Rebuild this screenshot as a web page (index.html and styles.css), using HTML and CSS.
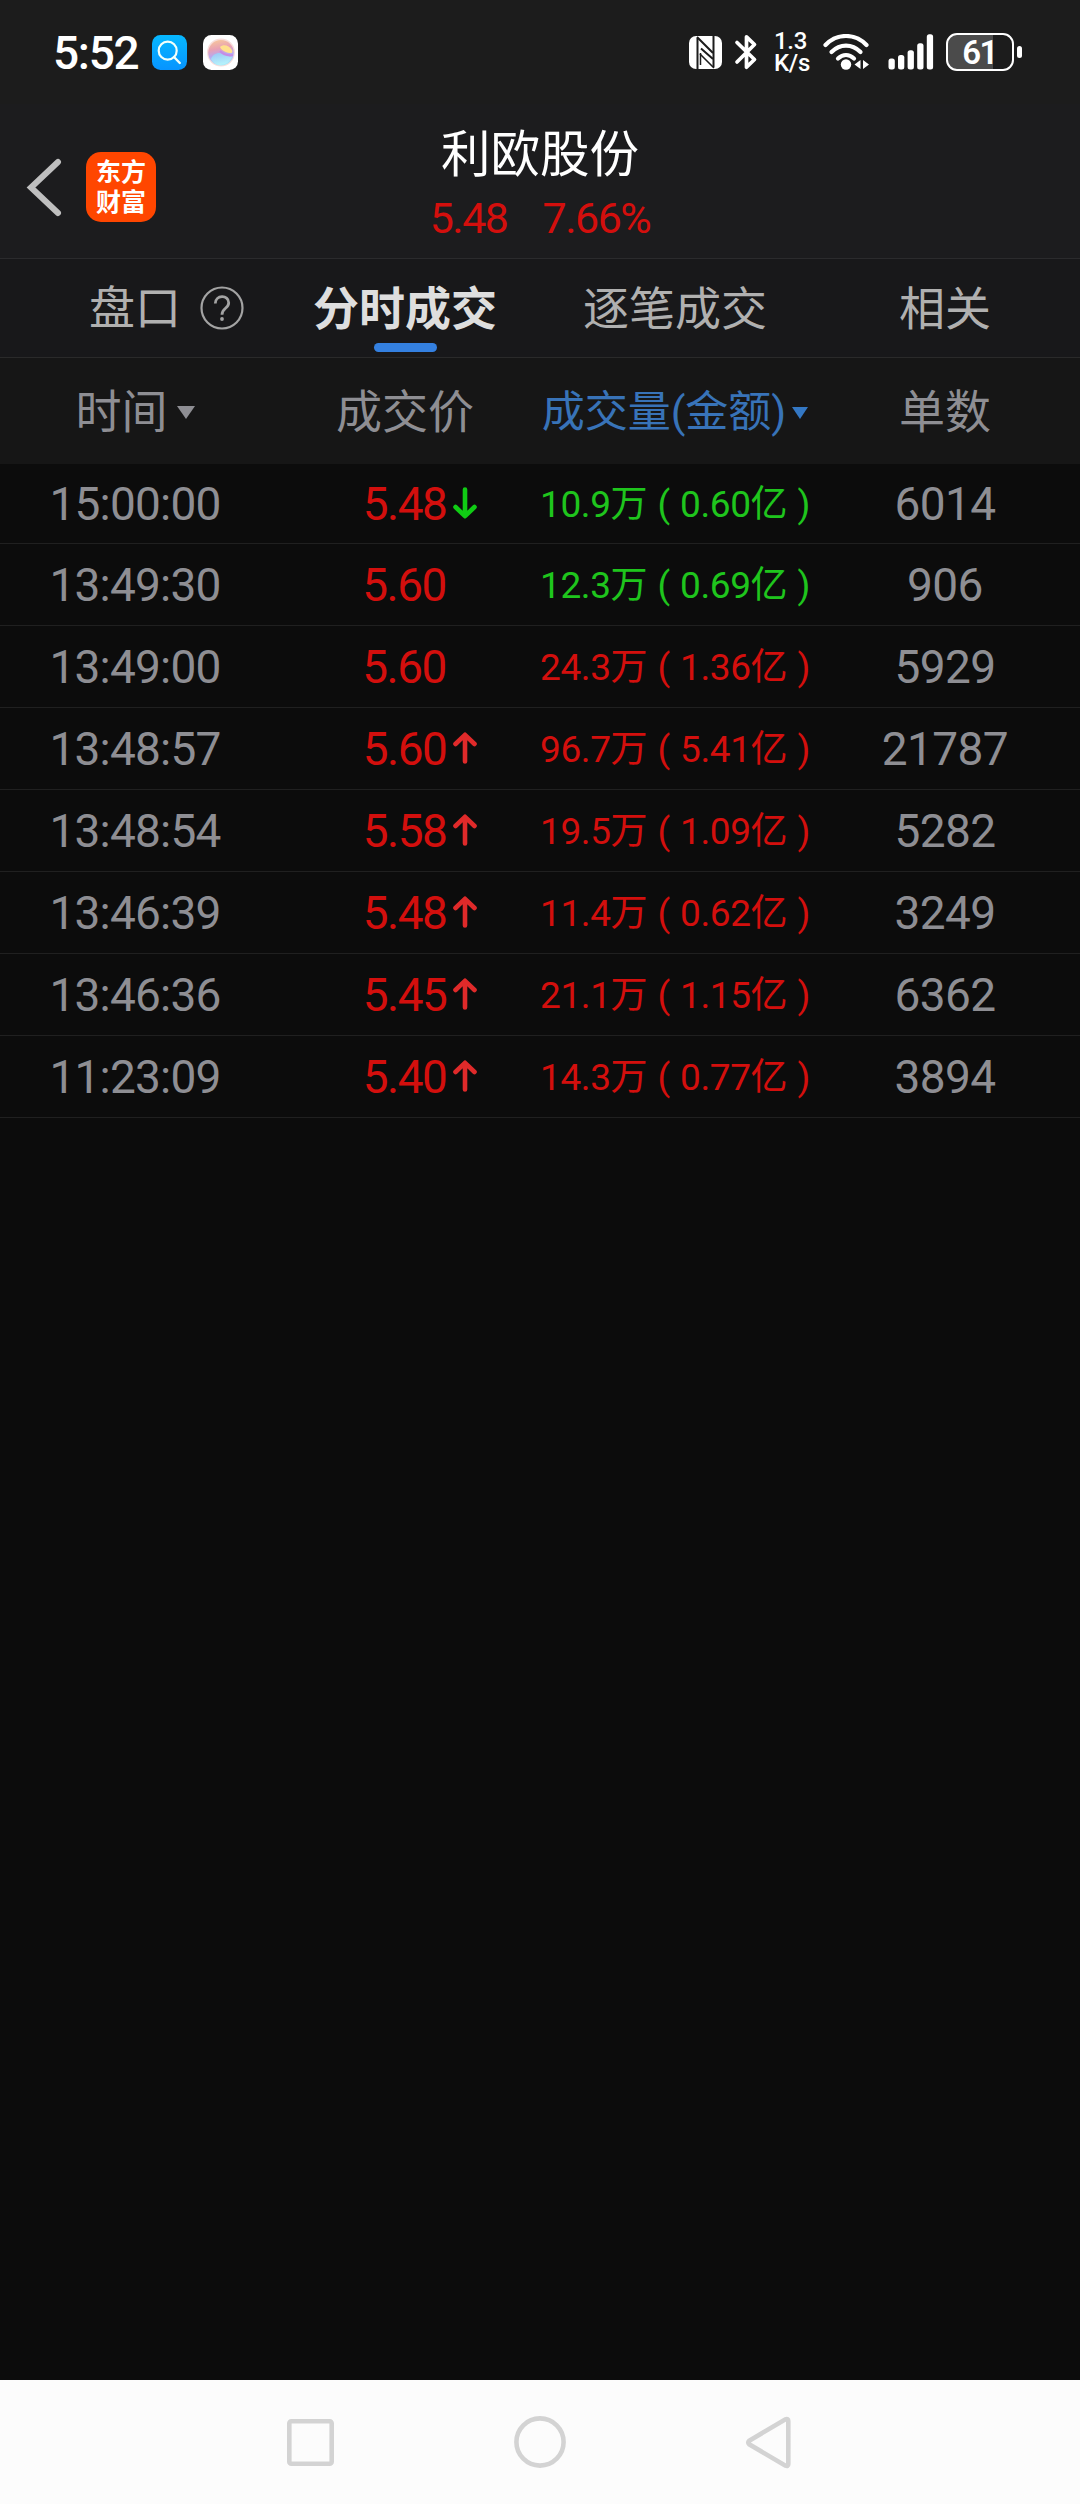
FILE: index.html
```
<!DOCTYPE html>
<html lang="zh-CN">
<head>
<meta charset="utf-8">
<title>利欧股份 - 分时成交</title>
<link rel="stylesheet" href="styles.css">
</head>
<body>
<svg class="defs" width="0" height="0">
  <symbol id="up" viewBox="0 0 24 32"><path d="M12 29.5V3M2.5 12 12 2.8 21.5 12" fill="none" stroke="currentColor" stroke-width="4.6" stroke-linecap="round" stroke-linejoin="round"/></symbol>
  <symbol id="down" viewBox="0 0 24 32"><path d="M12 2.5V29M2.5 20 12 29.2 21.5 20" fill="none" stroke="currentColor" stroke-width="4.6" stroke-linecap="round" stroke-linejoin="round"/></symbol>
</svg>
<div class="status">
  <span class="clock">5:52</span>
  <svg class="app-search" width="35" height="35" viewBox="0 0 35 35">
    <defs><linearGradient id="sky" x2="0" y2="1"><stop stop-color="#06b8ff"/><stop offset="1" stop-color="#0794ff"/></linearGradient></defs>
    <rect width="35" height="35" rx="8.5" fill="url(#sky)"/>
    <circle cx="15.7" cy="15.7" r="9" fill="none" stroke="#f2fffa" stroke-width="2.2"/>
    <path d="M22 22l5.8 6" stroke="#f2fffa" stroke-width="2.4" stroke-linecap="round"/>
  </svg>
  <svg class="app-orb" width="35" height="35" viewBox="0 0 35 35">
    <defs>
      <linearGradient id="orb" x1=".3" y1="0" x2=".5" y2="1"><stop stop-color="#f7c79c"/><stop offset=".35" stop-color="#e8a0b4"/><stop offset=".6" stop-color="#b9a8ee"/><stop offset="1" stop-color="#a5ecfa"/></linearGradient>
      <linearGradient id="lake" x1="0" y1="0" x2=".3" y2="1"><stop stop-color="#9cc4f4"/><stop offset="1" stop-color="#b4f2fb"/></linearGradient>
    </defs>
    <rect width="35" height="35" rx="8.5" fill="#fff"/>
    <circle cx="18" cy="17.5" r="14" fill="#f8dfdc"/>
    <circle cx="18" cy="17.7" r="12.8" fill="url(#orb)"/>
    <path d="M8 24c2-6 9-8 14-4l7 2c-2 5-7 8-12 8-4 0-7-2-9-6z" fill="url(#lake)"/>
    <path d="M17 16c4 4 8 5 13 4" fill="none" stroke="#c58be6" stroke-width="2.2"/>
    <path d="M17 12c3-3 9-2 12 3 .7 2 .5 3-1 3-4 0-9-2-11-6z" fill="#ffe08c"/>
  </svg>
  <span class="spacer"></span>
  <svg class="nfc" width="33" height="33" viewBox="0 0 33 33">
    <rect width="33" height="33" rx="7" fill="#fff"/>
    <path d="M8.500 33V2M24.500 0v31" fill="none" stroke="#1c1c1c" stroke-width="2"/>
    <path d="M8 1 24 17M12 12.500 24 23" stroke="#1c1c1c" stroke-width="2"/>
    <path d="M11.500 17v12" stroke="#1c1c1c" stroke-width="1.500"/>
    <path d="M11 18 25 32" stroke="#1c1c1c" stroke-width="1.600"/>
  </svg>
  <svg class="bt" width="24" height="36" viewBox="0 0 24 36"><path d="M3 8.5 20.5 25.500 12.500 33.200V2.800L20.500 10.500 3 28" fill="none" stroke="#fff" stroke-width="3.700" stroke-linecap="round" stroke-linejoin="round"/></svg>
  <span class="net"><span>1.3</span><span>K/s</span></span>
  <svg class="wifi" width="47" height="36" viewBox="0 0 47 36">
    <g fill="none" stroke="#fff" stroke-width="4.200" stroke-linecap="round"><path d="M2.500 11C14-1 32-1 43.500 11"/><path d="M8.500 18c8.500-8.500 20.500-8.500 29 0"/><path d="M15 24.500c5-4.500 11-4.500 16 0"/></g>
    <circle cx="23" cy="30.500" r="5.200" fill="#fff"/>
    <path d="M37.500 26v9L31.500 30.500zM40 26v9L46 30.500z" fill="#fff"/>
  </svg>
  <svg class="signal" width="46" height="36" viewBox="0 0 46 36" fill="#fff">
    <rect x=".5" y="24.500" width="6.300" height="11" rx="2.500"/><rect x="10" y="21" width="6.300" height="14.500" rx="2.500"/><rect x="19.600" y="16.200" width="6.300" height="19.300" rx="2.500"/><rect x="29.200" y="9.200" width="6.300" height="26.300" rx="2.500"/><rect x="38.800" y=".3" width="6.300" height="35.200" rx="2.500"/>
  </svg>
  <span class="battery">61</span><span class="nub"></span>
</div>

<header class="header">
  <svg class="back" width="36" height="60" viewBox="0 0 36 60"><path d="M32 5 5 30.500 32 56" fill="none" stroke="#bfbfbf" stroke-width="6" stroke-linecap="round"/></svg>
  <div class="logo"><span>东方</span><span>财富</span></div>
  <div class="stock"><h1>利欧股份</h1><p><span>5.48</span><span>7.66%</span></p></div>
</header>

<nav class="tabs">
  <div class="tab first">盘口<svg width="44" height="44" viewBox="0 0 44 44" fill="none" stroke="#a3a3a3"><circle cx="22" cy="22" r="20.500" stroke-width="2.200"/><path d="M15.300 17.500c0-9 13.400-9 13.400-.8 0 5.800-6.700 5.500-6.700 12" stroke-width="2.800"/><circle cx="22" cy="33" r="1.900" fill="#a3a3a3" stroke="none"/></svg></div>
  <div class="tab active">分时成交</div>
  <div class="tab">逐笔成交</div>
  <div class="tab">相关</div>
</nav>

<div class="thead">
  <div>时间<i class="caret"></i></div>
  <div>成交价</div>
  <div class="sorted">成交量(金额)<i class="caret"></i></div>
  <div>单数</div>
</div>

<main class="rows">
  <div class="row"><span class="time">15:00:00</span><span class="price">5.48<svg class="down"><use href="#down"/></svg></span><span class="vol green">10.9万 ( 0.60亿 )</span><span>6014</span></div>
  <div class="row"><span class="time">13:49:30</span><span class="price">5.60</span><span class="vol green">12.3万 ( 0.69亿 )</span><span>906</span></div>
  <div class="row"><span class="time">13:49:00</span><span class="price">5.60</span><span class="vol">24.3万 ( 1.36亿 )</span><span>5929</span></div>
  <div class="row"><span class="time">13:48:57</span><span class="price">5.60<svg><use href="#up"/></svg></span><span class="vol">96.7万 ( 5.41亿 )</span><span>21787</span></div>
  <div class="row"><span class="time">13:48:54</span><span class="price">5.58<svg><use href="#up"/></svg></span><span class="vol">19.5万 ( 1.09亿 )</span><span>5282</span></div>
  <div class="row"><span class="time">13:46:39</span><span class="price">5.48<svg><use href="#up"/></svg></span><span class="vol">11.4万 ( 0.62亿 )</span><span>3249</span></div>
  <div class="row"><span class="time">13:46:36</span><span class="price">5.45<svg><use href="#up"/></svg></span><span class="vol">21.1万 ( 1.15亿 )</span><span>6362</span></div>
  <div class="row"><span class="time">11:23:09</span><span class="price">5.40<svg><use href="#up"/></svg></span><span class="vol">14.3万 ( 0.77亿 )</span><span>3894</span></div>
</main>

<footer class="sysnav">
  <svg width="56" height="56" viewBox="0 0 56 56"><rect x="6.300" y="7.300" width="42.400" height="42.400" rx="2"/></svg>
  <svg width="56" height="56" viewBox="0 0 56 56"><circle cx="28" cy="28" r="23.600"/></svg>
  <svg width="56" height="56" viewBox="0 0 56 56"><path d="M8.200 26.700 44.500 5.300Q47.300 4.200 47.300 7V50Q47.300 52.800 44.500 51.700L8.200 30.300Q6.200 28.500 8.200 26.700z"/></svg>
</footer>
</body>
</html>
```
FILE: styles.css
```
* { box-sizing: border-box; }

body {
  margin: 0;
  width: 1080px;
  height: 2504px;
  display: flex;
  flex-direction: column;
  background: #0c0c0c;
  color: #8e8e93;
  font-family: Roboto, "Noto Sans CJK SC", sans-serif;
}

svg { display: block; flex: none; }
.defs { position: absolute; }

.status {
  height: 104px;
  flex: none;
  display: flex;
  align-items: center;
  padding: 0 58px 0 53px;
  background: #1c1c1c;
  color: #fff;
}
.clock { width: 99px; padding-top: 2px; font-size: 46px; font-weight: 500; line-height: 54px; letter-spacing: -1.300px; }
.app-orb { margin-left: 16px; }
.spacer { flex: 1; }
.bt { margin-left: 12px; }
.net { width: 34px; margin-left: 16px; display: flex; flex-direction: column; font-size: 24px; font-weight: 500; line-height: 22px; letter-spacing: -.300px; }
.wifi { margin-left: 15px; }
.signal { margin-left: 18px; }
.battery { width: 68px; height: 38px; margin-left: 12px; padding-right: 1px; border: 2.700px solid #fff; border-radius: 11px; background: linear-gradient(90deg, #4b4b4b 45px, transparent 45px); text-align: center; font-size: 33px; font-weight: 600; line-height: 35px; letter-spacing: -1.500px; }
.nub { width: 5px; height: 12px; margin-left: 3px; border-radius: 2.500px; background: #fff; }

.header {
  height: 155px;
  flex: none;
  display: flex;
  align-items: flex-start;
  padding-left: 26px;
  background: #1c1c1e;
  border-bottom: 1px solid #2b2b2d;
}
.back { margin-top: 53px; }
.logo { width: 70px; height: 70px; margin: 48px 0 0 24px; padding-top: 3px; border-radius: 15px; background: #ff4600; color: #fff; font-family: "Noto Sans CJK SC", sans-serif; font-weight: 700; font-size: 25px; line-height: 30px; display: flex; flex-direction: column; align-items: center; }
.stock { width: 768px; text-align: center; }
.stock h1 { margin: 20px 0 0; font-size: 49.500px; font-weight: 400; line-height: 62px; color: #fff; }
.stock p { margin: 7px 0 0; display: flex; justify-content: center; gap: 35px; color: #d30f0d; font-size: 43px; line-height: 50px; letter-spacing: -1.500px; }

.tabs { height: 99px; flex: none; display: grid; grid-template-columns: repeat(4, 270px); background: #18181a; border-bottom: 1px solid #2a2a2a; color: #b0b0b0; font-size: 46px; line-height: 101px; }
.tab { display: flex; flex-direction: column; align-items: center; height: 98px; }
.first { flex-direction: row; gap: 19px; padding-left: 89px; }
.active { color: #dedede; font-weight: 700; }
.active::after { content: ""; width: 63px; height: 9px; margin-top: -17px; border-radius: 5px; background: #3480e0; }

.thead, .row { display: grid; grid-template-columns: repeat(4, 270px); }
.thead { flex: none; height: 106px; background: #161616; font-size: 46px; line-height: 108px; }
.thead div { display: flex; justify-content: center; align-items: center; }
.thead .sorted { color: #3873b8; font-size: 43px; }
.caret { margin: 0 0 0 9px; border: solid transparent; border-width: 13px 9.500px 0; border-top-color: currentColor; }
.sorted .caret { border-width: 12px 8px 0; border-top-color: #3478c4; margin: 2px 0 0 6px; }

.rows { flex: 1; }
.row { height: 82px; border-bottom: 1px solid #202020; font-size: 46px; line-height: 83px; text-align: center; letter-spacing: -.600px; }
.row:first-child { height: 80px; line-height: 81px; }
.time { letter-spacing: -.800px; }
.price { display: flex; align-items: flex-start; justify-content: center; padding-right: 2px; color: #d30f0d; letter-spacing: -1.500px; }
.price svg { width: 24px; height: 32px; margin: 24px -32px 0 7px; color: #e02a2a; }
.price .down { margin-top: 23px; color: #10cc14; }
.vol { color: #d30f0d; font-size: 37px; letter-spacing: -.400px; word-spacing: 1.500px; white-space: nowrap; }
.green { color: #1fc51d; }

.sysnav { flex: none; height: 124px; padding-top: 34px; display: flex; justify-content: center; gap: 173px; background: #fcfcfc; }
.sysnav svg { fill: none; stroke: #d3d3d3; stroke-width: 4.600px; }
```
